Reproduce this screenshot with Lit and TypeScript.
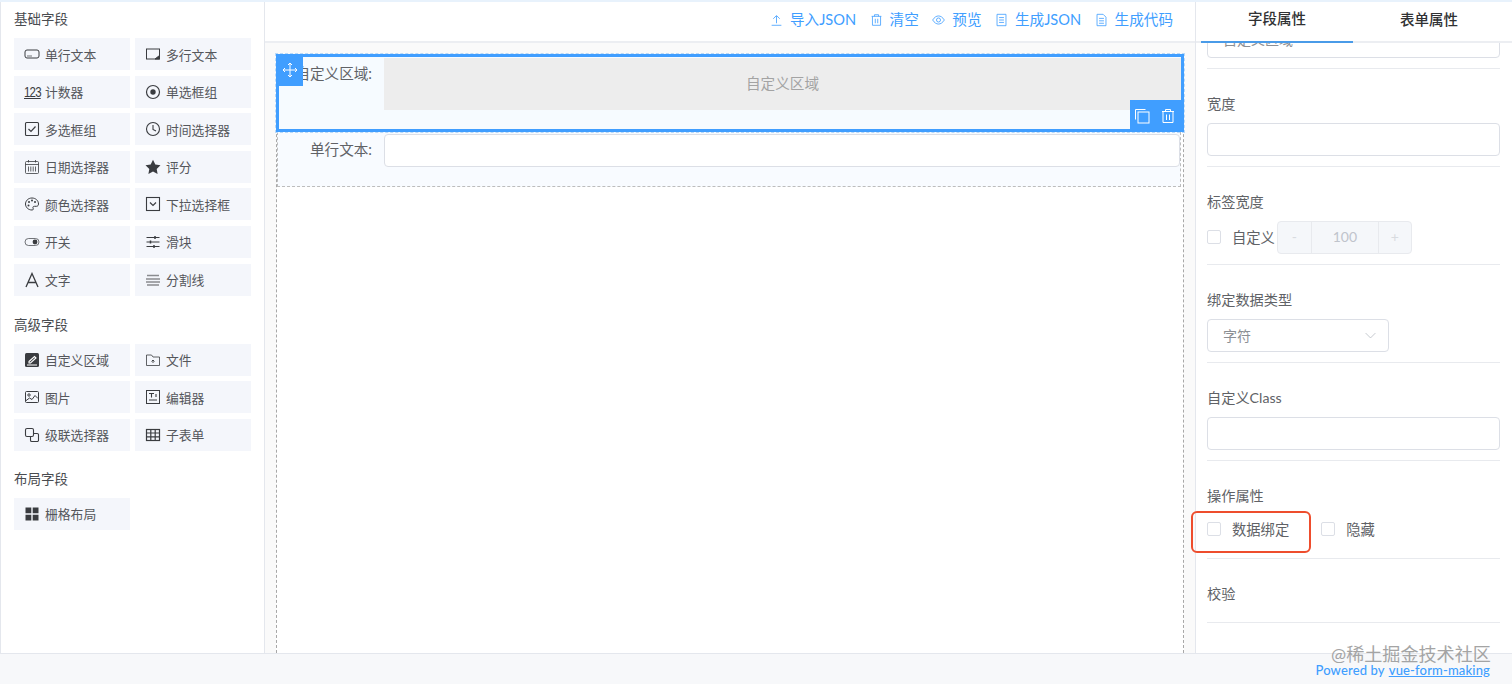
import { LitElement, html, css, svg } from "lit";
import { customElement } from "lit/decorators.js";

const ic: Record<string, any> = {
  input: svg`<rect x="1" y="4" width="14" height="8" rx="2"/><path d="M3 10h5" stroke-width=".7"/>`,
  textarea: svg`<rect x="1.500" y="3" width="13" height="10"/><path d="M10 13l4.500-3.500v3.500z" fill="currentColor"/>`,
  radio: svg`<circle cx="8" cy="8" r="6.500" stroke-width="1.200"/><circle cx="8" cy="8" r="2.700" fill="currentColor" stroke="none"/>`,
  check: svg`<rect x="1.500" y="1.500" width="13" height="13" rx="1" stroke-width="1.100"/><path d="M4.500 8l2.500 2.500 4.500-5" stroke-width="1.200"/>`,
  clock: svg`<circle cx="8" cy="8" r="6.500" stroke-width="1.100"/><path d="M8 4v4.500l3 1.500" stroke-width="1.100"/>`,
  date: svg`<rect x="1.500" y="2.500" width="13" height="12" rx="1" stroke-width=".8"/><path d="M1.500 5.500h13M4.500 1v2.500M11.500 1v2.500M4.500 7.500v5M6.800 7.500v5M9.200 7.500v5M11.500 7.500v5" stroke-width=".8"/>`,
  star: svg`<path d="M8 .8l2.300 4.700 5.200.8-3.800 3.600.9 5.200L8 12.600l-4.600 2.500.9-5.200L.5 6.300l5.200-.8z" fill="currentColor" stroke="none"/>`,
  color: svg`<path d="M8 2C4 2 1.500 5 1.500 8S4 14 8 14c1.500 0 1.500-1 1-2-.4-1 .3-1.700 1.500-1.700h2c1.300 0 2-1 2-2.300C14.500 4.500 11.500 2 8 2z"/><circle cx="5" cy="6" r="1" fill="currentColor" stroke="none"/><circle cx="8" cy="4.500" r="1" fill="currentColor" stroke="none"/><circle cx="11" cy="6" r="1" fill="currentColor" stroke="none"/><circle cx="4.500" cy="9.500" r="1" fill="currentColor" stroke="none"/>`,
  select: svg`<rect x="1.500" y="1.500" width="13" height="13" stroke-width="1.100"/><path d="M5 6.500l3 3 3-3" stroke-width="1.200"/>`,
  sw: svg`<rect x="1" y="4.500" width="14" height="7" rx="3.500" stroke-width=".7"/><circle cx="11" cy="8" r="2.400" fill="currentColor" stroke="none"/>`,
  slider: svg`<path d="M1.500 3.500h13M1.500 8h13M1.500 12.500h13" stroke-width="1.100"/><path d="M10 2v3M5.500 6.500v3M9 11v3" stroke-width="1.500"/>`,
  text: svg`<path d="M2 15L8 1.500 14 15M4 10.500h8" stroke-width="1.300"/>`,
  divider: svg`<path d="M2 3.500h12M1 7h14M1 10h14M2 13h12" stroke-width="1.500" stroke="#8a8c90"/>`,
  custom: svg`<rect x="1" y="1" width="14" height="14" rx="1.500" fill="currentColor" stroke="none"/><path d="M5 9.500l5.500-5 1.500 1.500-5.500 5H5zM3 13h10" stroke="#fff" stroke-width="1.100"/>`,
  file: svg`<path d="M1.500 13.500V3h5l1.500 2h6.500v8.500z" stroke-width=".8"/><path d="M8 11V8M6.500 9.500L8 8l1.500 1.500" stroke-width=".9"/>`,
  image: svg`<rect x="1.500" y="2.500" width="13" height="11" rx="1"/><circle cx="5" cy="6" r="1.200"/><path d="M1.500 12l4-3 2.500 1.500 3-4 3 3"/>`,
  editor: svg`<rect x="1.500" y="1.500" width="13" height="13"/><path d="M4 4.500h5M6.500 4.500v4M11 5v3M4 11h8" stroke-width="1.100"/>`,
  cascader: svg`<rect x="1.500" y="1.500" width="8" height="8" rx="1.500" stroke-width="1.100"/><path d="M10 6.500h3.200a1.300 1.300 0 0 1 1.300 1.300v5.400a1.300 1.300 0 0 1-1.300 1.300H7.800a1.300 1.300 0 0 1-1.300-1.300V10" stroke-width="1.100"/>`,
  table: svg`<rect x="1.500" y="2.500" width="13" height="11" stroke-width="1.200"/><path d="M1.500 6h13M1.500 9.800h13M5.800 2.500v11M10.200 2.500v11" stroke-width="1.200"/>`,
  grid: svg`<path d="M1.500 1.500h5.800v5.800H1.500zM8.700 1.500h5.800v5.800H8.700zM1.500 8.700h5.800v5.800H1.500zM8.700 8.700h5.800v5.800H8.700z" fill="currentColor" stroke="none"/>`,
  upload: svg`<path d="M8 12V3M4 6.500L8 2.500l4 4M2 14.500h12"/>`,
  trash: svg`<path d="M2 3.500h12M5.500 3.500V1.500h5v2M3 3.500V14.500h10v-11M6.500 6.500v5.500M9.500 6.500v5.500"/>`,
  eye: svg`<path d="M.8 8C3 4.500 5.500 3 8 3s5 1.500 7.200 5C13 11.500 10.500 13 8 13S3 11.500.8 8z"/><circle cx="8" cy="8" r="2.500"/>`,
  doc: svg`<path d="M2.500 1h11v14h-11zM5 5h6M5 8h6M5 11h6"/>`,
  code: svg`<path d="M2.500 1h7.500l3.500 3.500V15h-11zM5 6h6M5 9h6M5 12h6"/>`,
  copy: svg`<path d="M1.500 11.500V1.500h10"/><rect x="4" y="4" width="11" height="11"/>`,
  move: svg`<path d="M8 1v14M1 8h14M6 3l2-2 2 2M6 13l2 2 2-2M3 6L1 8l2 2M13 6l2 2-2 2"/>`,
};

const icon = (n: string, cls = "") =>
  html`<svg class="ic ${cls}" viewBox="0 0 16 16" fill="none" stroke="currentColor" stroke-width="1">${ic[n]}</svg>`;

const groups: { title: string; items: [string, string][] }[] = [
  { title: "基础字段", items: [["input","单行文本"],["textarea","多行文本"],["num","计数器"],["radio","单选框组"],["check","多选框组"],["clock","时间选择器"],["date","日期选择器"],["star","评分"],["color","颜色选择器"],["select","下拉选择框"],["sw","开关"],["slider","滑块"],["text","文字"],["divider","分割线"]] },
  { title: "高级字段", items: [["custom","自定义区域"],["file","文件"],["image","图片"],["editor","编辑器"],["cascader","级联选择器"],["table","子表单"]] },
  { title: "布局字段", items: [["grid","栅格布局"]] },
];

@customElement("app-root")
export class AppRoot extends LitElement {
  static styles = css`
    :host { display: block; height: 684px; overflow: hidden; position: relative; background: #fff;
      font-family: Lato, "Noto Sans CJK SC", sans-serif; color: #606266; font-size: 14px; }
    * { box-sizing: border-box; }
    .ic { width: 16px; height: 16px; flex: none; display: block; }
    .page { height: 684px; display: flex; flex-direction: column; border-top: 2px solid #e8f2fc; }
    .main { flex: 1; min-height: 0; display: flex; }
    .left { width: 265px; flex: none; border-left: 1px solid #e4e7ed; border-right: 1px solid #e4e7ed; padding-left: 13px; }
    .gt { font-size: 13.5px; line-height: 20px; color: #4a4c50; height: 20px; margin: 7px 0 9px; }
    .group + .group .gt { margin: 19px 0 9px; }
    .group + .group + .group .gt { margin: 18px 0 9px; }
    .items { display: grid; grid-template-columns: 116px 116px; column-gap: 5px; row-gap: 5.6px; }
    .it { height: 32px; background: #f4f6fb; display: flex; align-items: center; padding-left: 10px; gap: 5px; font-size: 12.8px; color: #55575c; }
    .it .ic { color: #3a3c40; }
    .num { width: 16px; flex: none; font-size: 14px; letter-spacing: -1px; text-decoration: underline; color: #3a3c40; font-family: "Liberation Sans Narrow", "Liberation Sans", sans-serif; line-height: 16px; transform: scaleX(.82); transform-origin: left; }
    .center { flex: 1; min-width: 0; display: flex; flex-direction: column; }
    .head { height: 41px; flex: none; border-bottom: 2px solid #eceef2; display: flex; justify-content: flex-end; align-items: center; padding-right: 22px; gap: 13.5px; color: #409eff; font-size: 14.6px; }
    .act { display: flex; align-items: center; gap: 7px; }
    .act span { padding-bottom: 6px; }
    .act .ic { width: 13px; height: 14px; margin-bottom: 3px; }
    .body { flex: 1; min-height: 0; background: #fafafa; padding: 11px 11px 0; }
    .canvas { height: 100%; background: #fff; border: 1px dashed #a8a8a8; border-bottom: 0; }
    .w { display: flex; }
    .lab { width: 106px; flex: none; padding-right: 12px; text-align: right; font-size: 14.6px; line-height: 31px; white-space: nowrap; color: #606266; }
    .sel { position: relative; height: 78px; margin: -1px -1px 0; border: 3px solid #409eff; outline: 1px dashed #b9d9f8; background: #f6fbff; }
    .sel .lab { width: 105px; line-height: 33px; }
    .area { flex: 1; height: 52px; margin-top: 1px; background: #ededed; color: #a3a3a3; display: flex; align-items: center; justify-content: center; font-size: 14.6px; padding-bottom: 4px; }
    .handle { position: absolute; left: -2px; top: -1px; width: 26px; height: 30px; background: #409eff; color: #fff; display: flex; align-items: flex-start; justify-content: center; padding-top: 6px; }
    .tools { position: absolute; right: -3px; bottom: -3px; width: 54px; height: 32px; background: #409eff; color: #fff; display: flex; align-items: center; justify-content: center; gap: 10px; padding-right: 4px; }
    .plain { height: 55px; margin: 0 2px 0 0; border: 1px dashed #bdbdbd; border-top: 0; background: #f8fbff; padding-top: 2px; }
    .field { flex: 1; height: 33px; border: 1px solid #dcdfe6; border-radius: 4px; background: #fff; }
    .right { width: 317px; flex: none; border-left: 1px solid #e4e7ed; display: flex; flex-direction: column; overflow: hidden; }
    .tabs { height: 41px; flex: none; border-bottom: 2px solid #eceef2; display: flex; padding-left: 5px; }
    .tab { width: 152px; height: 41px; display: flex; align-items: center; justify-content: center; font-size: 14.5px; color: #303133; font-weight: 500; padding-bottom: 8px; }
    .tab.on { border-bottom: 2px solid #4a9be8; margin-bottom: -2px; }
    .props { flex: 1; min-height: 0; overflow: hidden; padding: 0 12px 0 11px; }
    .sec { height: 98px; border-bottom: 1px solid #e8eaee; padding-top: 26px; }
    .sec.first { margin-top: -72px; }
    .sec.last { height: 64px; }
    .sl { height: 20px; line-height: 18px; font-size: 14.2px; color: #606266; margin-bottom: 8px; }
    .ctl { height: 33px; display: block; border: 1px solid #dcdfe6; border-radius: 4px; background: #fff; padding-left: 15px; line-height: 28px; color: #8c8f94; font-size: 14px; }
    .row { display: flex; align-items: center; height: 33px; }
    .row.up { margin-top: -2px; }
    .cb { width: 14px; height: 14px; flex: none; border: 1px solid #dcdfe6; border-radius: 2px; background: #fff; margin-right: 11px; margin-bottom: 2px; }
    .cb.next { margin-left: 32px; }
    .rt { font-size: 14.3px; color: #606266; white-space: nowrap; padding-bottom: 3px; }
    .numi { width: 135px; height: 33px; flex: none; display: grid; grid-template-columns: 33px 1fr 33px; border: 1px solid #e8eaee; border-radius: 4px; background: #f5f7fa; color: #c0c4cc; text-align: center; line-height: 30px; font-size: 14px; margin-left: 2px; }
    .numi span + span { border-left: 1px solid #e8eaee; }
    .numi .op { color: #d8dbe0; }
    .selbox { width: 182px; display: flex; align-items: center; justify-content: space-between; padding-right: 11px; }
    .selbox .ic { width: 13px; height: 13px; color: #b8bcc4; }
    .foot { height: 31px; flex: none; border-top: 1px solid #e4e7ed; background: #f7f8fa; display: flex; justify-content: flex-end; align-items: center; padding: 2px 22px 0 0; font-size: 13px; letter-spacing: .15px; color: #409eff; font-weight: 500; }
    .foot u { margin-left: 4px; }
    .mark { position: absolute; left: 1191px; top: 511px; width: 120px; height: 42px; border: 2px solid #ee4d2d; border-radius: 6px; }
    .wm { position: absolute; left: 1331px; top: 641px; font-size: 18.1px; line-height: 26px; color: #9b9b9b; white-space: nowrap; opacity: .9; }
  `;

  render() {
    return html`<div class="page">
      <div class="main">
        <div class="left">
          ${groups.map((g) => html`<div class="group">
            <div class="gt">${g.title}</div>
            <div class="items">
              ${g.items.map(([k, t]) => html`<div class="it">${k === "num" ? html`<span class="num">123</span>` : icon(k)}<span>${t}</span></div>`)}
            </div>
          </div>`)}
        </div>
        <div class="center">
          <div class="head">
            <span class="act">${icon("upload")}<span>导入JSON</span></span>
            <span class="act">${icon("trash")}<span>清空</span></span>
            <span class="act">${icon("eye")}<span>预览</span></span>
            <span class="act">${icon("doc")}<span>生成JSON</span></span>
            <span class="act">${icon("code")}<span>生成代码</span></span>
          </div>
          <div class="body">
            <div class="canvas">
              <div class="w sel">
                <div class="lab">自定义区域:</div>
                <div class="area">自定义区域</div>
                <div class="handle">${icon("move")}</div>
                <div class="tools">${icon("copy")}${icon("trash")}</div>
              </div>
              <div class="w plain">
                <div class="lab">单行文本:</div>
                <div class="field"></div>
              </div>
            </div>
          </div>
        </div>
        <div class="right">
          <div class="tabs">
            <div class="tab on">字段属性</div>
            <div class="tab">表单属性</div>
          </div>
          <div class="props">
            <div class="sec first"><div class="sl"></div><div class="ctl">自定义区域</div></div>
            <div class="sec"><div class="sl">宽度</div><div class="ctl"></div></div>
            <div class="sec"><div class="sl">标签宽度</div>
              <div class="row"><span class="cb"></span><span class="rt">自定义</span>
                <div class="numi"><span class="op">-</span><span>100</span><span class="op">+</span></div></div></div>
            <div class="sec"><div class="sl">绑定数据类型</div>
              <div class="ctl selbox"><span>字符</span><svg class="ic" viewBox="0 0 16 16" fill="none" stroke="currentColor"><path d="M2 5l6 6 6-6"/></svg></div></div>
            <div class="sec"><div class="sl">自定义Class</div><div class="ctl"></div></div>
            <div class="sec"><div class="sl">操作属性</div>
              <div class="row up"><span class="cb"></span><span class="rt">数据绑定</span>
                <span class="cb next"></span><span class="rt">隐藏</span></div></div>
            <div class="sec last"><div class="sl">校验</div></div>
          </div>
        </div>
      </div>
      <div class="foot"><span>Powered by</span><u>vue-form-making</u></div>
    </div>
    <div class="mark"></div>
    <div class="wm">@稀土掘金技术社区</div>`;
  }
}
